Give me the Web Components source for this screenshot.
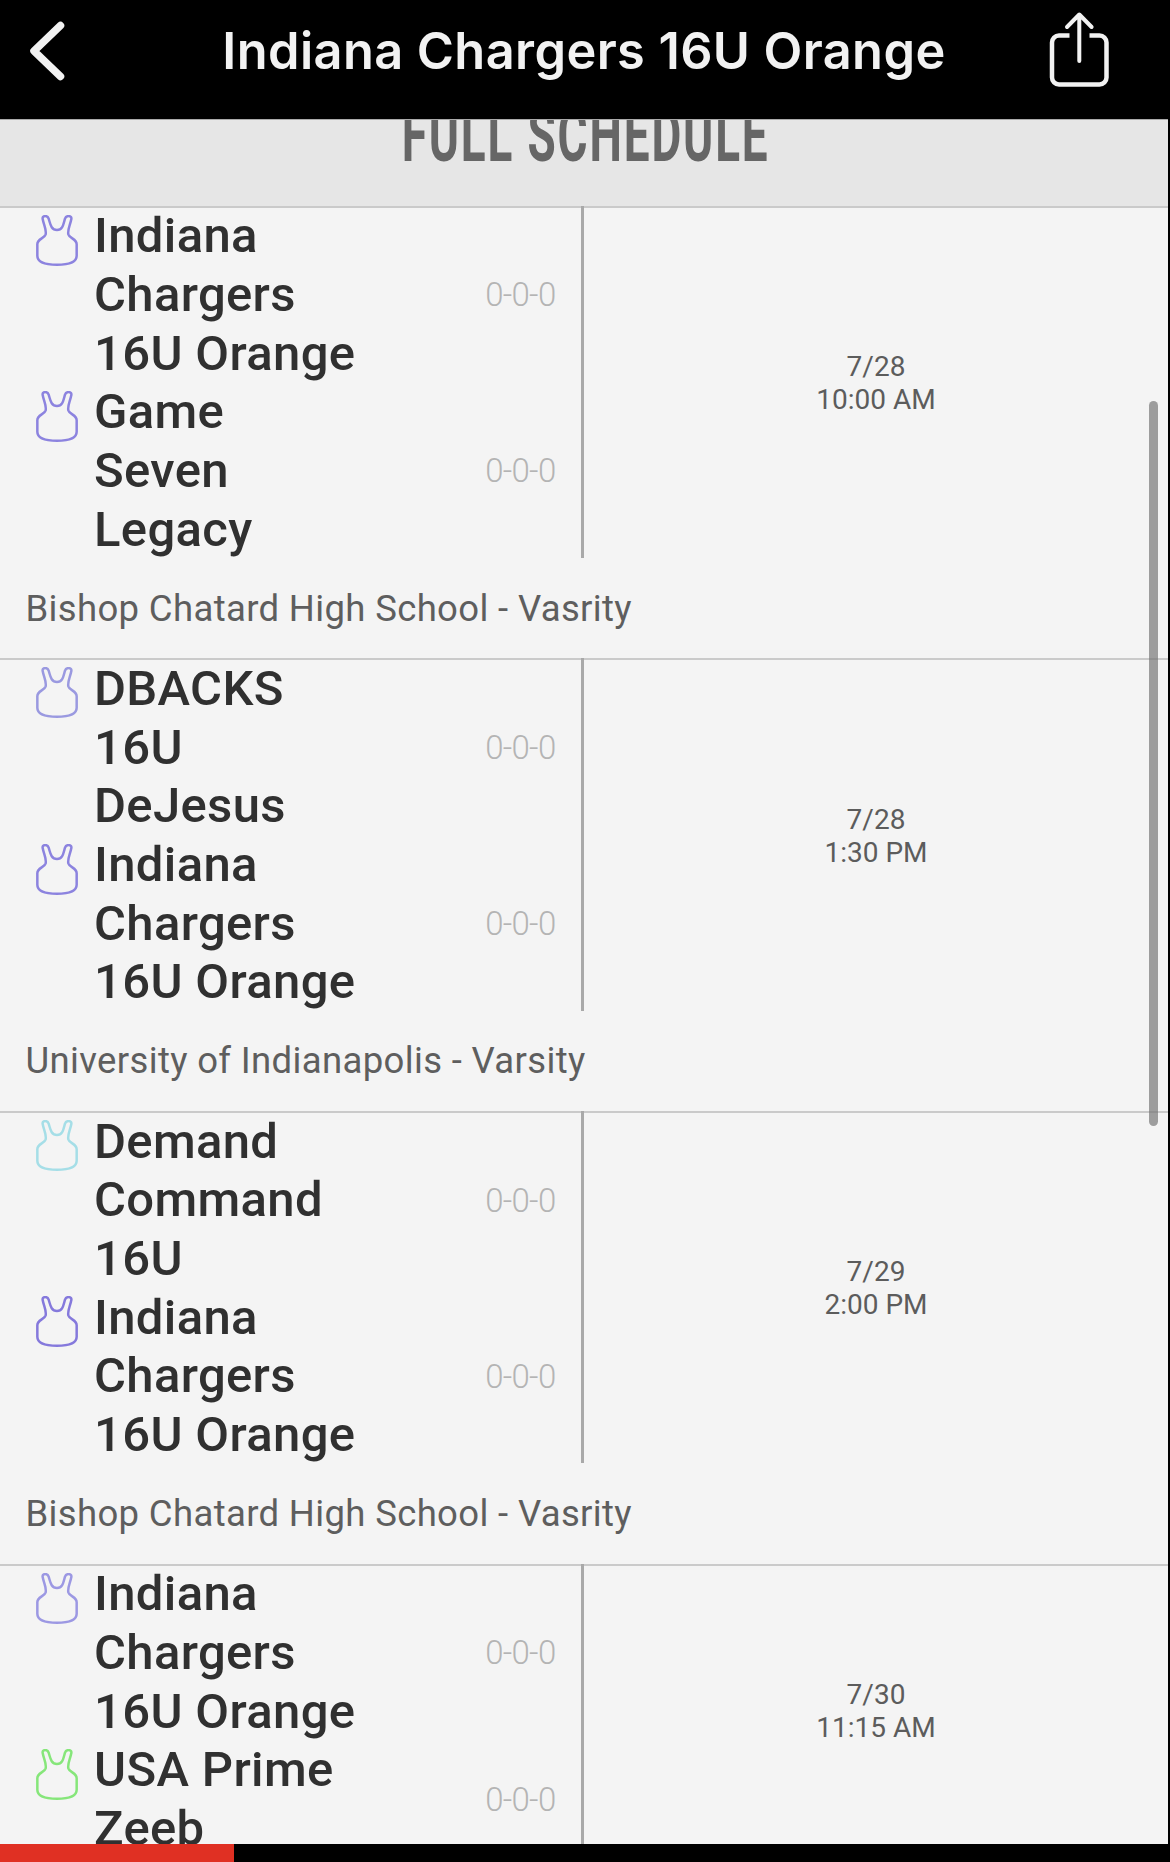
<!DOCTYPE html>
<html lang="en">
<head>
<meta charset="utf-8">
<title>Indiana Chargers 16U Orange</title>
<style>
  body {
    margin: 0;
    background: #000;
    font-family: Roboto, "Liberation Sans", sans-serif;
  }
</style>
</head>
<body>
<schedule-app>
  <nav-bar>Indiana Chargers 16U Orange</nav-bar>
  <section-title>FULL SCHEDULE</section-title>
  <game-row date="7/28" time="10:00 AM">
    <team-line color="#8c83df">Indiana<br>Chargers<br>16U Orange</team-line>
    <team-line color="#8c83df">Game<br>Seven<br>Legacy</team-line>
    <span slot="place">Bishop Chatard High School - Vasrity</span>
  </game-row>
  <game-row date="7/28" time="1:30 PM">
    <team-line color="#9a99e0">DBACKS<br>16U<br>DeJesus</team-line>
    <team-line color="#8c83df">Indiana<br>Chargers<br>16U Orange</team-line>
    <span slot="place">University of Indianapolis - Varsity</span>
  </game-row>
  <game-row date="7/29" time="2:00 PM">
    <team-line color="#a5dee7">Demand<br>Command<br>16U</team-line>
    <team-line color="#8579dc">Indiana<br>Chargers<br>16U Orange</team-line>
    <span slot="place">Bishop Chatard High School - Vasrity</span>
  </game-row>
  <game-row date="7/30" time="11:15 AM">
    <team-line color="#9c98e3">Indiana<br>Chargers<br>16U Orange</team-line>
    <team-line color="#86e67a">USA Prime<br>Zeeb</team-line>
  </game-row>
  <tab-strip slot="bottom"></tab-strip>
</schedule-app>

<script>
class ScheduleApp extends HTMLElement {
  constructor() {
    super();
    this.attachShadow({ mode: 'open' });
  }

  connectedCallback() {
    this.shadowRoot.innerHTML = `
      <style>
        :host {
          display: flex;
          flex-direction: column;
          position: relative;
          height: 1862px;
          overflow: hidden;
        }

        .page {
          flex: 1;
          min-height: 0;
          overflow: hidden;
          margin-right: 2px;
          background: #f4f4f4;
        }

        .thumb {
          position: absolute;
          top: 401px;
          right: 12px;
          width: 9px;
          height: 725px;
          border-radius: 5px;
          background: rgba(110, 110, 110, 0.65);
        }
      </style>
      <div class="page"><slot></slot></div>
      <slot name="bottom"></slot>
      <div class="thumb"></div>
    `;
  }
}

class NavBar extends HTMLElement {
  constructor() {
    super();
    this.attachShadow({ mode: 'open' });
  }

  connectedCallback() {
    this.shadowRoot.innerHTML = `
      <style>
        :host {
          display: grid;
          grid-template-columns: 1fr auto 1fr;
          align-items: center;
          height: 118.5px;
          box-sizing: border-box;
          padding: 0 26px 16px;
          background: #000;
          color: #f2f2f2;
        }

        h1 {
          margin: 0;
          font: 600 50.5px/60px Inter, sans-serif;
          letter-spacing: 0.4px;
          white-space: nowrap;
        }

        svg {
          display: block;
          fill: none;
          stroke: currentColor;
          stroke-linecap: round;
          stroke-linejoin: round;
        }

        .share {
          justify-self: end;
          margin: -3px 31px 0 0;
        }
      </style>
      <svg class="back" width="42" height="64" viewBox="0 0 42 64" stroke-width="7.5">
        <path d="M34.5 6.5 8 32l26.5 25.5"/>
      </svg>
      <h1><slot></slot></h1>
      <svg class="share" width="64" height="80" viewBox="0 0 64 80" stroke-width="4.5">
        <path stroke-linecap="butt" d="M22.5 25.5H12a7 7 0 0 0-7 7V67.500a7 7 0 0 0 7 7h40.500a7 7 0 0 0 7-7V32.500a7 7 0 0 0-7-7H42.500"/>
        <path stroke-width="4" d="M32.300 51V5M20 17 32.300 4.500 44.600 17"/>
      </svg>
    `;
  }
}

class SectionTitle extends HTMLElement {
  constructor() {
    super();
    this.attachShadow({ mode: 'open' });
  }

  connectedCallback() {
    this.shadowRoot.innerHTML = `
      <style>
        :host {
          display: flex;
          align-items: flex-end;
          justify-content: center;
          height: 87.3px;
          box-sizing: border-box;
          padding: 0 0 27px 3px;
          overflow: hidden;
          background: #e6e6e6;
          border-top: 1px solid #aaa;
        }

        h2 {
          margin: 0;
          color: #666;
          font-size: 74px;
          font-weight: 700;
          line-height: 86px;
          letter-spacing: 3px;
          white-space: nowrap;
          transform: scaleX(0.62);
        }
      </style>
      <h2><slot></slot></h2>
    `;
  }
}

class GameRow extends HTMLElement {
  constructor() {
    super();
    this.attachShadow({ mode: 'open' });
  }

  connectedCallback() {
    this.shadowRoot.innerHTML = `
      <style>
        :host {
          display: block;
          box-shadow: inset 0 2px #cacaca;
        }

        .game {
          display: grid;
          grid-template-columns: 584px 1fr;
        }

        .teams {
          box-sizing: border-box;
          border-right: 3px solid #a9a9a9;
        }

        .when {
          align-self: center;
          padding-top: 2px;
          color: #5c5c5c;
          font-size: 28px;
          line-height: 33px;
          text-align: center;
        }

        .place {
          height: 100.4px;
          box-sizing: border-box;
          padding: 28.5px 0 0 25.5px;
          color: #5e5e5e;
          font-size: 36.5px;
          line-height: 43px;
          letter-spacing: 0.35px;
          white-space: nowrap;
        }
      </style>
      <div class="game">
        <div class="teams"><slot></slot></div>
        <div class="when">${this.getAttribute('date')}<br>${this.getAttribute('time')}</div>
      </div>
      <div class="place"><slot name="place"></slot></div>
    `;
  }
}

class TeamLine extends HTMLElement {
  constructor() {
    super();
    this.attachShadow({ mode: 'open' });
  }

  connectedCallback() {
    this.shadowRoot.innerHTML = `
      <style>
        :host {
          display: grid;
          grid-template-columns: 58px 1fr auto;
          padding: 0 25.5px 0 36px;
        }

        svg {
          display: block;
          margin-top: 9px;
          fill: none;
          stroke: ${this.getAttribute('color')};
          stroke-width: 7.5;
          stroke-linejoin: round;
        }

        .name {
          padding-top: 1.5px;
          margin-bottom: -1.5px;
          color: #303030;
          font-size: 49px;
          font-weight: 500;
          line-height: 58.7px;
          letter-spacing: 0.35px;
          white-space: nowrap;
        }

        .record {
          align-self: center;
          padding-top: 3px;
          color: #b4b4b4;
          font-size: 33px;
          font-weight: 300;
          line-height: 40px;
          letter-spacing: -0.7px;
        }
      </style>
      <svg width="42" height="51" viewBox="0 0 126 153">
        <path d="M29 58C32 43 23 29 20 12C18 1 34 0 38 11C43 27 45 45 63 45S82 27 87 11C91 0 108 1 106 12C103 29 94 43 97 58C101 71 122 71 122 88V122C122 143 98 149 63 149S4 143 4 122V88C4 71 25 71 29 58Z"/>
      </svg>
      <div class="name"><slot></slot></div>
      <div class="record">0-0-0</div>
    `;
  }
}

class TabStrip extends HTMLElement {
  constructor() {
    super();
    this.attachShadow({ mode: 'open' });
  }

  connectedCallback() {
    this.shadowRoot.innerHTML = `
      <style>
        :host {
          display: flex;
          flex: none;
          height: 18.5px;
          background: #000;
        }

        .active {
          width: 20%;
          background: #e03023;
        }
      </style>
      <div class="active"></div>
    `;
  }
}

customElements.define('schedule-app', ScheduleApp);
customElements.define('nav-bar', NavBar);
customElements.define('section-title', SectionTitle);
customElements.define('game-row', GameRow);
customElements.define('team-line', TeamLine);
customElements.define('tab-strip', TabStrip);
</script>
</body>
</html>
